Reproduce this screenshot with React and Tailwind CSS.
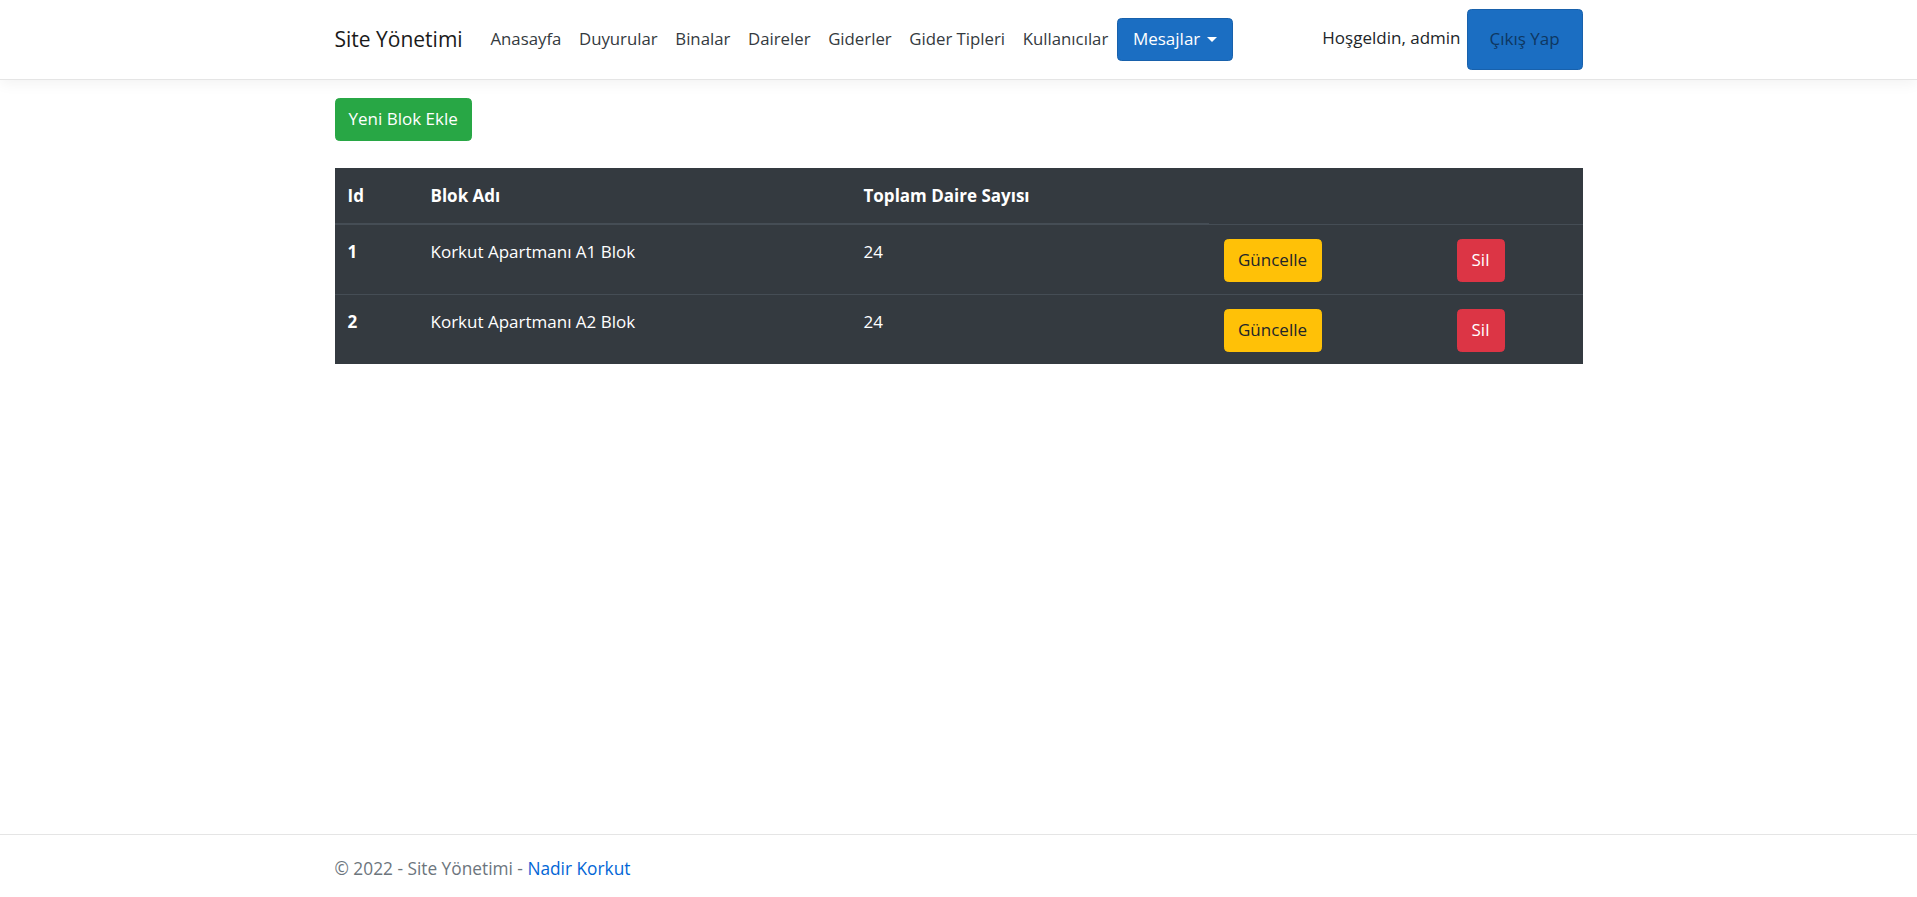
import React from "react";

const links = ["Anasayfa", "Duyurular", "Binalar", "Daireler", "Giderler", "Gider Tipleri", "Kullanıcılar"];

const blocks = [
  { id: 1, name: "Korkut Apartmanı A1 Blok", count: 24 },
  { id: 2, name: "Korkut Apartmanı A2 Blok", count: 24 },
];

export default function App() {
  return (
    <div className="min-h-screen flex flex-col bg-white font-['Open_Sans',sans-serif] text-[17px] leading-[26.4px] text-[#212529]">
      {/* Navbar */}
      <nav className="h-[80px] bg-white border-b border-[#e5e5e5] shadow-[0_4px_13px_rgba(0,0,0,0.05)]">
        <div className="w-[1248px] mx-auto h-full flex items-center">
          <span className="text-[21px] text-[#1a1a1a] mr-[19px]">Site Yönetimi</span>
          <ul className="flex items-center">
            {links.map((l) => (
              <li key={l} className="px-[8.8px] text-[16.8px] text-[#343a40]">
                {l}
              </li>
            ))}
            <li>
              <button className="h-[43px] w-[116px] flex items-center justify-center gap-[7px] bg-[#1b6ec2] border border-[#1861ac] rounded-[4.4px] text-white">
                Mesajlar
                <span className="w-0 h-0 border-t-[5.5px] border-t-white border-x-[5.5px] border-x-transparent" />
              </button>
            </li>
          </ul>
          <div className="ml-auto flex items-center">
            <span className="text-[#212529] -mt-[3px]">Hoşgeldin, admin</span>
            <button className="ml-[6px] h-[61px] w-[116px] bg-[#1b6ec2] border border-[#1861ac] rounded-[4.4px] text-[#0e3761]">
              Çıkış Yap
            </button>
          </div>
        </div>
      </nav>

      {/* Content */}
      <main className="w-[1248px] mx-auto mt-[18px]">
        <button className="h-[43px] px-[13px] bg-[#28a745] border border-[#28a745] rounded-[4.4px] text-white">
          Yeni Blok Ekle
        </button>

        <table className="mt-[27px] w-full table-fixed border-collapse bg-[#343a40] text-white">
          <colgroup>
            <col className="w-[83px]" />
            <col className="w-[433px]" />
            <col className="w-[358px]" />
            <col className="w-[235px]" />
            <col className="w-[139px]" />
          </colgroup>
          <thead>
            <tr>
              <th className="text-left font-bold px-[13px] pt-[15px] pb-[14px] border-b-2 border-[#454d55]">Id</th>
              <th className="text-left font-bold px-[13px] pt-[15px] pb-[14px] border-b-2 border-[#454d55]">Blok Adı</th>
              <th className="text-left font-bold px-[13px] pt-[15px] pb-[14px] border-b-2 border-[#454d55]">Toplam Daire Sayısı</th>
            </tr>
          </thead>
          <tbody>
            {blocks.map((b) => (
              <tr key={b.id} className="border-t border-[#454d55] align-top">
                <td className="px-[13px] pt-[14px] pb-[12px] font-bold">{b.id}</td>
                <td className="px-[13px] pt-[14px] pb-[12px]">{b.name}</td>
                <td className="px-[13px] pt-[14px] pb-[12px]">{b.count}</td>
                <td className="px-[15px] pt-[14px] pb-[12px]">
                  <button className="h-[43px] w-[98px] bg-[#ffc107] border border-[#ffc107] rounded-[4.4px] text-[#212529]">
                    Güncelle
                  </button>
                </td>
                <td className="px-[13px] pt-[14px] pb-[12px]">
                  <button className="h-[43px] w-[48px] bg-[#dc3545] border border-[#dc3545] rounded-[4.4px] text-white">
                    Sil
                  </button>
                </td>
              </tr>
            ))}
          </tbody>
        </table>
      </main>

      {/* Footer */}
      <footer className="mt-auto h-[63px] pt-[6px] border-t border-[#e5e5e5] flex items-center">
        <div className="w-[1248px] mx-auto text-[17.3px] text-[#6c757d]">
          © 2022 - Site Yönetimi - <a className="text-[#0366d6]">Nadir Korkut</a>
        </div>
      </footer>
    </div>
  );
}
